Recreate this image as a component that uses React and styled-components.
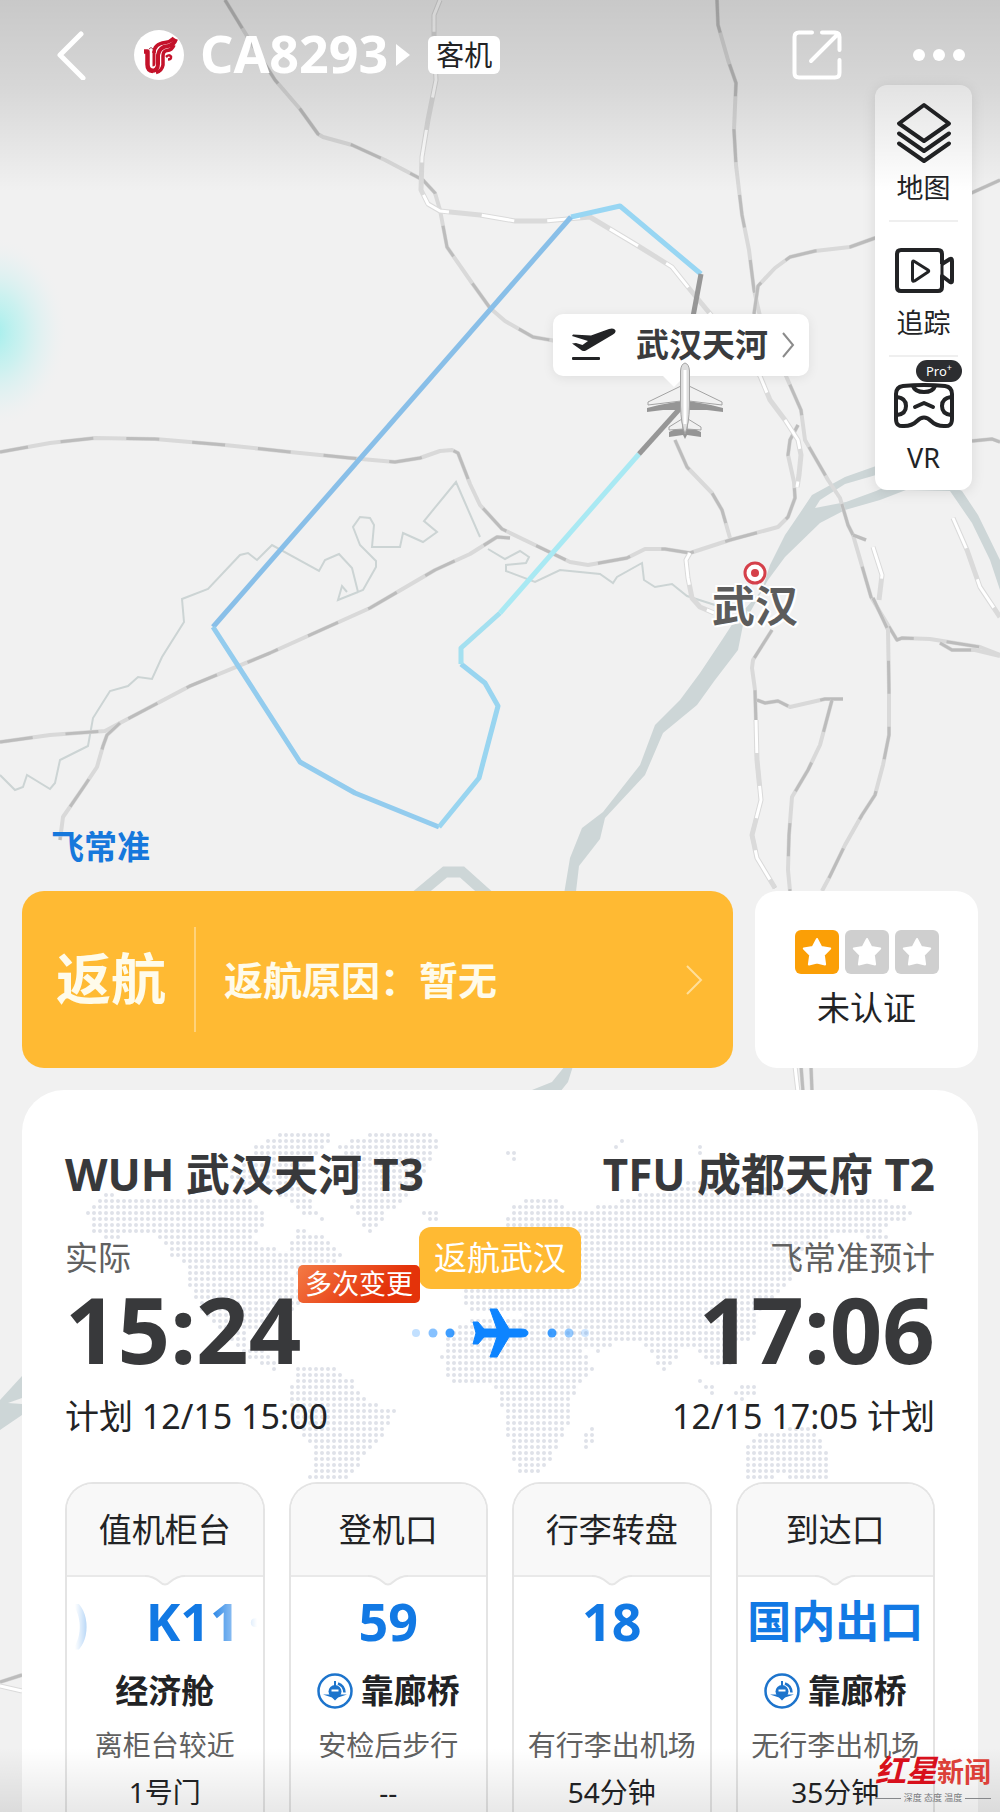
import React from "react";
import styled, { createGlobalStyle, css } from "styled-components";

const GlobalStyle = createGlobalStyle`
  *, *::before, *::after { box-sizing: border-box; }
  body {
    margin: 0;
    background: #f1f1f1;
    color: #222325;
    font-family: "Noto Sans", "Noto Sans CJK SC", sans-serif;
  }
  button {
    border: 0;
    margin: 0;
    padding: 0;
    background: none;
    color: inherit;
    font: inherit;
    cursor: pointer;
  }
  h1, h2, h3, p, dl, dd, dt { margin: 0; font: inherit; }
  svg { display: block; flex: none; }
`;

/* ---------- page frame ---------- */

const Page = styled.div`
  position: relative;
  display: flex;
  flex-direction: column;
  min-height: 100vh;
  overflow: hidden;
  background: #f1f1f1;
`;

const MapCanvas = styled.svg`
  position: absolute;
  inset: 0;
  width: 100%;
  height: 1812px;
`;

const TopShade = styled.div`
  position: absolute;
  top: 0;
  left: 0;
  right: 0;
  height: 192px;
  background: linear-gradient(rgba(0, 0, 0, 0.17), rgba(0, 0, 0, 0.11) 45%, rgba(0, 0, 0, 0));
  pointer-events: none;
`;

const BottomShade = styled.div`
  position: absolute;
  bottom: 0;
  left: 0;
  right: 0;
  height: 64px;
  background: linear-gradient(rgba(0, 0, 0, 0), rgba(0, 0, 0, 0.09));
  pointer-events: none;
`;

const Stage = styled.section`
  position: relative;
  display: flex;
  flex-direction: column;
  min-height: 891px;
`;

/* ---------- header ---------- */

const Header = styled.header`
  position: relative;
  z-index: 2;
  display: flex;
  align-items: center;
  height: 85px;
  padding: 24px 35px 0 56px;
  color: #fff;
`;

const FlightTitle = styled.div`
  display: flex;
  align-items: center;
  gap: 8px;
  margin-left: 48px;
  flex: 1;
`;

const FlightNumber = styled.h1`
  margin-left: 8px;
  font-size: 52px;
  line-height: 56px;
  padding-bottom: 4px;
  font-weight: 700;
`;

const PlaneType = styled.span`
  margin-left: 10px;
  padding: 0 8px;
  border-radius: 6px;
  background: #fff;
  color: #222325;
  font-size: 28px;
  line-height: 38px;
`;

const HeaderActions = styled.div`
  display: flex;
  align-items: center;
  gap: 71px;
`;

/* ---------- tool panel ---------- */

const ToolPanel = styled.nav`
  display: flex;
  flex-direction: column;
  align-self: flex-end;
  width: 97px;
  margin-right: 28px;
  border-radius: 12px;
  background: #fff;
  box-shadow: 0 2px 14px rgba(0, 0, 0, 0.1);
`;

const Tool = styled.button`
  position: relative;
  display: flex;
  flex-direction: column;
  align-items: center;
  justify-content: space-between;
  height: 135px;
  padding: 16px 0 12px;
  font-size: 27px;
  line-height: 40px;

  & + & {
    padding-top: 19px;
  }

  & + &::before {
    content: "";
    position: absolute;
    top: 0;
    left: 14px;
    right: 14px;
    height: 2px;
    background: #efefef;
  }
`;

const ToolIcon = styled.span`
  display: flex;
  align-items: center;
  justify-content: center;
  height: 64px;
`;

const ProBadge = styled.span`
  position: absolute;
  top: 5px;
  right: 10px;
  width: 46px;
  border-radius: 11px;
  background: #2c2d30;
  color: #fff;
  font-size: 13px;
  line-height: 22px;
  text-align: center;

  sup {
    font-size: 9px;
    line-height: 0;
  }
`;

/* ---------- map pins ---------- */

const AirportPin = styled.button`
  position: absolute;
  top: 314px;
  left: 553px;
  display: flex;
  align-items: center;
  height: 62px;
  padding: 0 14px 0 18px;
  border-radius: 10px;
  background: #fff;
  box-shadow: 0 2px 12px rgba(0, 0, 0, 0.08);
  color: #3a3b3d;
  font-size: 33px;
  line-height: 48px;
  font-weight: 700;

  span {
    margin: 0 13px 0 19px;
  }

  &::after {
    content: "";
    position: absolute;
    top: 100%;
    left: 110px;
    border: 11px solid transparent;
    border-top-color: #fff;
    border-bottom: 0;
  }
`;

const PlaneMarker = styled.svg`
  position: absolute;
  top: 362px;
  left: 645px;
`;

const CityPin = styled.div`
  position: absolute;
  top: 561px;
  left: 712px;
  display: flex;
  flex-direction: column;
  align-items: center;
  color: #5c5c5c;
  font-size: 43px;
  line-height: 42px;
  font-weight: 700;
  text-shadow: 2px 0 #fff, -2px 0 #fff, 0 2px #fff, 0 -2px #fff, 2px 2px #fff, -2px -2px #fff;
`;

const Brand = styled.p`
  margin-top: auto;
  padding: 0 0 20px 51px;
  color: #1678dc;
  font-size: 33px;
  line-height: 48px;
  font-weight: 700;
`;

/* ---------- status row ---------- */

const StatusRow = styled.section`
  position: relative;
  display: flex;
  gap: 22px;
  padding: 0 22px;
  height: 177px;
`;

const StatusBanner = styled.button`
  display: flex;
  flex: 1;
  align-items: center;
  padding: 0 30px 0 34px;
  border-radius: 22px;
  background: #ffba33;
  color: #fffbea;
  text-align: left;
`;

const StatusName = styled.strong`
  padding-right: 28px;
  padding-bottom: 4px;
  border-right: 2px solid #ffd27a;
  font-size: 55px;
  line-height: 101px;
`;

const StatusReason = styled.span`
  flex: 1;
  padding-left: 28px;
  font-size: 39px;
  line-height: 56px;
  font-weight: 700;
`;

const CertCard = styled.div`
  display: flex;
  flex-direction: column;
  align-items: center;
  width: 223px;
  padding-top: 39px;
  border-radius: 22px;
  background: #fff;
  font-size: 33px;
  line-height: 48px;
`;

const Stars = styled.div`
  display: flex;
  gap: 6px;
  margin-bottom: 10px;
`;

const Star = styled.span`
  display: flex;
  align-items: center;
  justify-content: center;
  width: 44px;
  height: 44px;
  border-radius: 6px;
  background: ${(p) => (p.$on ? "#fb9f06" : "#cfcfcf")};
`;

/* ---------- flight card ---------- */

const FlightCard = styled.main`
  position: relative;
  display: flex;
  flex: 1;
  flex-direction: column;
  margin: 22px 22px 0;
  padding: 54px 43px 0 43px;
  border-radius: 42px 42px 0 0;
  background: #fff;
`;

const WorldMap = styled.svg`
  position: absolute;
  top: 0;
  left: 0;
  width: 100%;
  height: 393px;
`;

const Route = styled.div`
  position: relative;
  display: grid;
  grid-template-columns: 1fr auto 1fr;
`;

const Endpoint = styled.div`
  display: flex;
  flex-direction: column;
  color: #38393b;
  text-align: ${(p) => (p.$end ? "right" : "left")};
  white-space: nowrap;
`;

const AirportName = styled.h2`
  height: 60px;
  font-size: 44px;
  line-height: 60px;
  font-weight: 700;
`;

const TimeNote = styled.p`
  margin-top: 30px;
  color: #616161;
  font-size: 33px;
  line-height: 48px;
`;

const BigTime = styled.p`
  font-size: 92px;
  line-height: 94px;
  font-weight: 700;
`;

const PlanTime = styled.p`
  margin-top: 16px;
  margin-bottom: 42px;
  color: #222325;
  font-size: 34px;
  line-height: 48px;
`;

const RouteMiddle = styled.div`
  display: flex;
  flex-direction: column;
  align-items: center;
  width: 0;
  padding-top: 83px;
`;

const ReturnBadge = styled.span`
  position: relative;
  padding: 0 15px;
  border-radius: 12px;
  background: #ffba33;
  color: #fff;
  font-size: 33px;
  line-height: 62px;
  white-space: nowrap;
`;

const ChangeBadge = styled.span`
  position: absolute;
  top: 38px;
  right: 100%;
  margin-right: -1px;
  padding: 0 7px;
  border-radius: 5px;
  background: linear-gradient(135deg, #f47a45, #e4330a 70%);
  color: #fff;
  font-size: 27px;
  line-height: 38px;
`;

const FlightLine = styled.svg`
  margin-top: 17px;
`;

/* ---------- info tiles ---------- */

const Tiles = styled.div`
  position: relative;
  display: grid;
  grid-template-columns: repeat(4, 1fr);
  gap: 24px;
  flex: 1;
`;

const Tile = styled.section`
  display: flex;
  flex-direction: column;
  align-items: center;
  min-height: 329px;
  border: 2px solid #e4e4e4;
  border-bottom: 0;
  border-radius: 28px 28px 0 0;
  background: #fff;
  overflow: hidden;
  white-space: nowrap;
`;

const TileHead = styled.h3`
  position: relative;
  align-self: stretch;
  border-bottom: 2px solid #e9e9e9;
  background: #f8f8f8;
  font-size: 33px;
  line-height: 91px;
  text-align: center;

  svg {
    position: absolute;
    top: 100%;
    left: 50%;
    margin-left: -20px;
  }
`;

const fade = css`
  mask-image: linear-gradient(90deg, transparent 8px, #000 48px, #000 140px, transparent 190px);
`;

const TileValue = styled.p`
  display: flex;
  align-items: center;
  justify-content: center;
  gap: ${(p) => (p.$scrolling ? "8px" : "0")};
  align-self: stretch;
  height: 60px;
  margin-top: 14px;
  padding-left: ${(p) => (p.$scrolling ? "4px" : "0")};
  color: #1279e4;
  font-size: ${(p) => (p.$words ? "44px" : "52px")};
  line-height: 60px;
  font-weight: 700;
  ${(p) => p.$scrolling && fade}
`;

const TrailingGroup = styled.span`
  margin-right: auto;
`;

const TileMode = styled.p`
  display: flex;
  align-items: center;
  gap: 8px;
  height: 48px;
  margin-top: 16px;
  font-size: 33px;
  line-height: 48px;
  font-weight: 700;
`;

const TileHint = styled.p`
  margin-top: 10px;
  color: #616161;
  font-size: 28px;
  line-height: 40px;
`;

const TileResult = styled.p`
  margin-top: 7px;
  font-size: 28px;
  line-height: 40px;
`;

/* ---------- news mark ---------- */

const NewsMark = styled.div`
  position: absolute;
  right: 9px;
  bottom: 8px;
  display: flex;
  flex-direction: column;
  width: 116px;
  color: #d8101c;
`;

const NewsName = styled.div`
  display: flex;
  align-items: baseline;
  justify-content: space-between;
  font-size: 27px;
  line-height: 40px;
  font-weight: 700;
  white-space: nowrap;

  em {
    font-size: 31px;
    font-weight: 700;
  }

  span { color: #dc4038; }
`;

const NewsMotto = styled.div`
  display: flex;
  align-items: center;
  gap: 3px;
  color: #77797c;
  font-size: 9px;
  line-height: 12px;
  white-space: nowrap;

  &::before,
  &::after {
    content: "";
    flex: 1;
    height: 1px;
    background: #85878a;
  }
`;

/* ---------- map data ---------- */

const RAILS = [
  "225,0 247,36 275,80 300,109 318,134 323,137 352,145 385,160 423,180 435,193 440,210 447,247 472,283 490,308 505,321 533,337 556,341",
  "717,0 718,25 728,60 736,83 734,130 736,165 742,215 749,250 754,290 762,325 786,376 801,410 805,440 828,480 840,498 848,525 853,535 871,597 897,640 902,638 930,639 980,647 1000,655",
  "853,535 866,540",
  "1000,180 945,205 875,238 850,247 815,251 790,257 775,268 758,286 754,314",
  "798,425 790,440 788,455 794,482 795,498 788,517 778,527 730,540 690,553 665,549 645,549 627,558 588,565 570,562 535,545 502,529 480,505 470,484 458,453 452,450 440,451 420,458 395,462 350,458 290,452 225,445 155,439 95,438 50,443 0,452",
  "675,440 687,467 712,493 722,510 730,538",
  "0,742 50,735 105,731 120,723 190,686 270,653 370,608 435,570 470,554 497,537 510,538",
  "120,723 107,735 103,746 97,767 85,785 63,817 60,840",
  "772,630 753,660 752,668 755,690 757,760 761,800 752,835 757,858 775,888",
  "757,700 765,703 778,701 790,707 825,699 843,699",
  "832,700 820,745 808,770 792,797 789,835 788,870 790,891",
  "873,598 888,630 889,690 889,735 883,765 875,795 862,815 845,845 830,876 822,891",
  "801,1066 803,1092",
  "811,1066 812,1092",
  "940,643 952,650 975,650 1000,656",
  "972,441 992,439 1000,442",
  "0,1682 22,1675",
];

const PALE_RAILS = [
  "440,0 434,15 434,40 436,80 428,120 422,157 421,190 428,204 440,211 480,215 515,221 545,221 590,217 635,244 672,267 692,292 712,316 760,376 770,400 785,420 798,440 801,455 799,475 797,487",
  "690,553 686,560 688,578 692,598 700,607 714,613",
  "873,547 882,575 879,600",
  "953,518 967,550 980,587 1000,617",
  "756,720 757,760 761,800 752,835 757,858 775,888",
  "795,1066 798,1092",
  "0,1686 22,1691",
];

const STREAMS = [
  "0,775 15,790 23,787 27,775 50,789 55,783 60,760 88,746 93,718 110,691 128,686 138,677 152,679 162,657 184,622 182,599 208,589 240,555 248,553 257,560 272,545 319,571 325,560 339,554 352,568 358,592 363,590 376,567 376,561 360,545 353,527 360,517 370,518 374,525 372,547 400,547 403,533 423,542 437,532 424,521 456,482 466,505 480,537",
  "358,592 338,600 342,586 347,592",
  "488,549 505,559 520,551 529,557 526,563 506,565 506,571 535,582 560,570 600,574 613,583 617,577 642,563 644,580 655,587 672,584 687,596 715,605",
];

const RIVERS = [
  "876,466 845,477 812,495 800,513 785,535 770,565 762,590 735,620 722,640 700,673 680,700 655,725 640,765 603,812 582,828 570,858 563,900 575,900 579,866 600,839 605,818 645,775 663,733 697,705 715,680 738,650 743,625 768,580 785,557 820,523 845,510 880,500 906,490 950,491 972,523 990,560 1000,590 1000,560 978,515 962,491 940,480 900,480 876,491 846,502 815,508 820,500 845,484 876,475",
  "0,1400 22,1376 22,1398 8,1403 22,1404 22,1415 0,1430",
  "527,1092 552,1082 565,1066 573,1066 568,1082 560,1092",
];

const TRACK = [
  ["701,274 620,206 571,217", "#98d6f3"],
  ["571,217 213,627", "#89bfe8"],
  ["213,627 300,762 355,793 439,827", "#93ccee"],
  ["439,827 479,778 498,706 485,683 461,664", "#99d5f0"],
  ["461,664 461,648 500,613", "#a4e0f0"],
  ["500,613 639,454", "#a9e9f3"],
  ["701,274 692,322", "#979797"],
  ["639,454 684,404", "#979797"],
];

function Terrain() {
  return (
    <MapCanvas viewBox="0 0 1000 1812" preserveAspectRatio="xMidYMin slice" aria-hidden="true">
      <defs>
        <radialGradient id="glow">
          <stop offset="0" stopColor="#a2efec" />
          <stop offset="0.4" stopColor="#bcf1ef" stopOpacity="0.7" />
          <stop offset="0.75" stopColor="#dcf1f2" stopOpacity="0.4" />
          <stop offset="1" stopColor="#f1f1f1" stopOpacity="0" />
        </radialGradient>
      </defs>
      <ellipse cx="-6" cy="332" rx="74" ry="96" fill="url(#glow)" />
      <g fill="#cdd6d7">
        {RIVERS.map((p) => <polygon key={p} points={p} />)}
      </g>
      <path d="M415 897L445 872H462L490 897" fill="none" stroke="#cdd6d7" strokeWidth="11" />
      <g fill="none" stroke="#ccd4d4" strokeWidth="2">
        {STREAMS.map((p) => <polyline key={p} points={p} />)}
      </g>
      <g fill="none" strokeLinejoin="round">
        {RAILS.map((p) => (
          <g key={p}>
            <polyline points={p} stroke="#d9d9d9" strokeWidth="4" />
            <polyline points={p} stroke="#bcbcbc" strokeWidth="3" strokeDasharray="33 33" />
          </g>
        ))}
        {PALE_RAILS.map((p) => (
          <g key={p}>
            <polyline points={p} stroke="#dadada" strokeWidth="5" />
            <polyline points={p} stroke="#ffffff" strokeWidth="3" strokeDasharray="33 33" />
          </g>
        ))}
      </g>
      <g fill="none" strokeWidth="5" strokeLinejoin="round">
        {TRACK.map(([p, c]) => <polyline key={p} points={p} stroke={c} />)}
      </g>
    </MapCanvas>
  );
}

/* ---------- dotted world ---------- */

const LAND = [
  "102,1194 160,1198 215,1198 250,1198 270,1215 262,1228 250,1238 278,1250 285,1265 300,1290 300,1308 280,1312 262,1325 250,1330 245,1345 262,1350 275,1362 282,1374 262,1365 235,1348 220,1330 205,1318 190,1290 188,1265 172,1255 160,1238 130,1232 115,1240 92,1235 92,1222 84,1214",
  "294,1228 315,1232 330,1240 343,1258 330,1268 300,1275 280,1262 290,1248",
  "255,1145 285,1133 332,1133 330,1145 310,1160 300,1185 315,1208 324,1222 300,1212 280,1195 240,1192 225,1175 250,1160",
  "335,1145 375,1133 428,1133 442,1142 430,1160 420,1188 400,1202 385,1215 372,1234 360,1222 350,1206 362,1185 350,1165",
  "422,1211 440,1211 440,1223 428,1223",
  "298,1368 335,1368 352,1380 362,1398 396,1410 385,1435 370,1450 355,1472 347,1484 308,1484 315,1455 300,1430 290,1405 292,1385",
  "445,1338 460,1322 500,1316 566,1322 590,1362 597,1370 575,1390 570,1425 555,1455 540,1476 520,1476 510,1450 505,1420 500,1395 495,1386 450,1382 441,1360",
  "580,1438 592,1428 596,1434 590,1448 581,1458",
  "462,1304 466,1286 500,1270 503,1225 512,1205 535,1195 552,1196 572,1210 600,1206 640,1194 700,1180 780,1186 850,1197 900,1202 918,1215 880,1228 892,1240 872,1240 850,1232 812,1240 797,1262 795,1280 775,1295 755,1318 758,1335 735,1345 732,1365 708,1366 700,1352 682,1348 665,1376 655,1360 640,1340 620,1340 600,1352 575,1348 565,1326 500,1310 480,1316",
  "698,1376 716,1390 712,1398 700,1384",
  "735,1390 750,1380 762,1384 752,1398 738,1400",
  "743,1448 765,1430 780,1434 800,1424 815,1430 825,1450 832,1468 825,1484 795,1484 785,1475 748,1484",
  "612,1145 624,1140 620,1152",
  "694,1146 706,1146 706,1154 696,1154",
  "506,1150 518,1150 516,1166",
].map((s) => s.split(" ").map((pt) => pt.split(",").map(Number)));

function onLand(x, y) {
  return LAND.some((poly) => {
    let inside = false;
    for (let i = 0, j = poly.length - 1; i < poly.length; j = i++) {
      const [xi, yi] = poly[i];
      const [xj, yj] = poly[j];
      if (yi > y !== yj > y && x < ((xj - xi) * (y - yi)) / (yj - yi) + xi) inside = !inside;
    }
    return inside;
  });
}

let worldPath = "";
for (let y = 1135; y < 1483; y += 6) {
  for (let x = 82; x < 930; x += 6) {
    if (onLand(x, y)) worldPath += `M${x} ${y}h0`;
  }
}

/* ---------- drawings ---------- */

const AirlineLogo = () => (
  <svg width="50" height="50" viewBox="0 0 50 50" aria-label="Air China">
    <circle cx="25" cy="25" r="25" fill="#fff" />
    <g fill="none" stroke="#c4122a" strokeLinejoin="round">
      <path d="M10 21.500h3.500v13q0 6 5.500 6.500" strokeWidth="4.500" />
      <path d="M42 9Q40 15 34 16Q25 17 24 25V34Q24 41 17 41" strokeWidth="4" />
      <path d="M20 21v12q0 2-1.500 2" strokeWidth="3" />
      <path d="M40 8Q36 12 31 12.500Q20 14 20 23" strokeWidth="3.500" />
      <path d="M40 15Q38 20 33 20.500Q29 21 29 26V35Q28 41 22 42.500" strokeWidth="3.500" />
      <path d="M32 27Q35 24 37 26.500Q37.500 29.500 34 29.500" strokeWidth="2.500" />
    </g>
    <path d="M15 19l2-1.500 2 1.500" fill="none" stroke="#9c4a58" />
  </svg>
);

const Chevron = ({ w, h, color, stroke }) => (
  <svg width={w} height={h} viewBox={`0 0 ${w} ${h}`} fill="none" stroke={color} strokeWidth={stroke}>
    <path d={`M2 2L${w - 2} ${h / 2}L2 ${h - 2}`} />
  </svg>
);

const LayersIcon = () => (
  <svg width="56" height="62" viewBox="0 0 56 62" fill="none" stroke="#222325" strokeWidth="4" strokeLinejoin="round" strokeLinecap="round">
    <path d="M28 3L53 21.500L28 39L3 21.500Z" />
    <path d="M3 31.500L28 49L53 31.500" />
    <path d="M3 41.500L28 59L53 41.500" />
  </svg>
);

const CameraIcon = () => (
  <svg width="60" height="46" viewBox="0 0 60 46" fill="none" stroke="#222325" strokeWidth="4" strokeLinejoin="round">
    <path d="M48 16V6q0-4-4-4H7q-4 0-4 4v33q0 4 4 4h37q4 0 4-4V28l8 6q2 1 2-1V13q0-3-2-2l-8 5" />
    <path d="M48 16v13" strokeWidth="3" />
    <path d="M18.500 14.500q0-2.500 2-1L34 22q1.500 1 0 2l-13.500 9q-2 1-2-1z" strokeWidth="3" />
  </svg>
);

const VrIcon = () => (
  <svg width="62" height="46" viewBox="0 0 62 46" fill="none" stroke="#222325" strokeWidth="4" strokeLinejoin="round" strokeLinecap="round">
    <path d="M10 3Q31 1 52 3Q59 4 59 11V36Q59 44 51 43Q43 43 38 38Q31 31 24 38Q19 43 11 43Q3 44 3 36V11Q3 4 10 3Z" />
    <path d="M20 3q2 6 11 6t11-6" />
    <path d="M4 14q9 1 9 9t-9 9M58 14q-9 1-9 9t9 9" />
    <path d="M22 24l9-4 9 4" />
  </svg>
);

const ShareIcon = () => (
  <svg width="50" height="50" viewBox="0 0 50 50" fill="none" stroke="#fff" strokeWidth="4" strokeLinecap="round" strokeLinejoin="round">
    <path d="M20 2.500H7q-4.500 0-4.500 4.500v36q0 4.500 4.500 4.500h36q4.500 0 4.500-4.500V30" />
    <path d="M30 2.500h13q4.500 0 4.500 4.500v13M45 5L19 31" />
  </svg>
);

const TakeoffIcon = () => (
  <svg width="46" height="34" viewBox="0 0 46 34" fill="#222325">
    <path d="M2 6.500L20 7.500L38 1Q43-.5 44.500 2.500Q45 5 42 6.500L15 22.500Q12 24 9.500 21.500L1 15.500L5 15L11.500 17L17 13L1 8Z" />
    <rect x="1" y="29" width="28" height="3" rx="1" />
  </svg>
);

const Aircraft = () => (
  <PlaneMarker width="80" height="80" viewBox="0 0 80 80" aria-hidden="true">
    <g fill="#959595">
      <path d="M36 39L14 43L2 46V50L18 48L36 48ZM44 39L66 43L78 46V50L62 48L44 48Z" />
      <path d="M37 64L24 70V75L38 73L40 77L42 73L56 75V70L43 64Z" />
    </g>
    <g fill="#f1f1f1" stroke="#a3a3a3" strokeWidth="1">
      <path d="M36 24L3 40V43L36 39ZM44 24L77 40V43L44 39Z" />
      <path d="M37 57L24 65V68L38 67ZM43 57L56 65V68L42 67Z" />
      <path d="M40 1Q36 2 35.500 9V44Q36 62 40 72Q44 62 44.500 44V9Q44 2 40 1Z" fill="#dedede" />
    </g>
    <path d="M40 8v54" stroke="#fff" strokeWidth="3" />
  </PlaneMarker>
);

const StarShape = () => (
  <svg width="32" height="32" viewBox="0 0 32 32">
    <path d="M16 3l4.200 8 9 1.500-6.400 6.500 1.300 9.500-8.100-2-8.100 2L9.200 19 2.800 12.500l9-1.500z" fill="#fff" stroke="#fff" strokeWidth="2" strokeLinejoin="round" />
  </svg>
);

const BridgeIcon = () => (
  <svg width="36" height="36" viewBox="0 0 36 36">
    <circle cx="18" cy="18" r="16.500" fill="#fff" stroke="#1d74cc" strokeWidth="2.500" />
    <path d="M18 8v5" stroke="#1d74cc" strokeWidth="2" />
    <circle cx="18" cy="18.500" r="6.500" fill="#1d74cc" />
    <path d="M21 10.500q6 2 6.500 9" fill="none" stroke="#1d74cc" strokeWidth="2.500" />
    <path d="M6 21.500h24l-9 3-3 3-3-3z" fill="#1d74cc" />
    <path d="M14.500 17.500h7" stroke="#fff" strokeWidth="2" />
  </svg>
);

const Notch = () => (
  <svg width="40" height="12" viewBox="0 0 40 12">
    <path d="M0 0H40Q33 0 25 7Q20 12 15 7Q7 0 0 0Z" fill="#f8f8f8" />
    <path d="M0 1Q8 1 15 7Q20 12 25 7Q32 1 40 1" fill="none" stroke="#e6e6e6" strokeWidth="2" />
  </svg>
);

/* ---------- content ---------- */

const TILES = [
  { title: "值机柜台", value: "K11", scrolling: true, mode: "经济舱", hint: "离柜台较近", result: "1号门" },
  { title: "登机口", value: "59", mode: "靠廊桥", bridge: true, hint: "安检后步行", result: "--" },
  { title: "行李转盘", value: "18", mode: "", hint: "有行李出机场", result: "54分钟" },
  { title: "到达口", value: "国内出口", words: true, mode: "靠廊桥", bridge: true, hint: "无行李出机场", result: "35分钟" },
];

export default function App() {
  return (
    <Page>
      <GlobalStyle />
      <Terrain />

      <Stage>
        <Header>
          <button aria-label="返回">
            <svg width="30" height="50" viewBox="0 0 30 50" fill="none" stroke="#fff" strokeWidth="5" strokeLinecap="round" strokeLinejoin="round">
              <path d="M25 4L4 25L27 48" />
            </svg>
          </button>
          <FlightTitle>
            <AirlineLogo />
            <FlightNumber>CA8293</FlightNumber>
            <svg width="14" height="22" viewBox="0 0 14 22"><path d="M0 0L14 11L0 22Z" fill="#fff" /></svg>
            <PlaneType>客机</PlaneType>
          </FlightTitle>
          <HeaderActions>
            <button aria-label="分享"><ShareIcon /></button>
            <button aria-label="更多">
              <svg width="52" height="12" viewBox="0 0 52 12" fill="#fff">
                <circle cx="6" cy="6" r="6" /><circle cx="26" cy="6" r="6" /><circle cx="46" cy="6" r="6" />
              </svg>
            </button>
          </HeaderActions>
        </Header>

        <ToolPanel>
          <Tool><ToolIcon><LayersIcon /></ToolIcon>地图</Tool>
          <Tool><ToolIcon><CameraIcon /></ToolIcon>追踪</Tool>
          <Tool>
            <ToolIcon><VrIcon /></ToolIcon>VR
            <ProBadge>Pro<sup>+</sup></ProBadge>
          </Tool>
        </ToolPanel>

        <AirportPin>
          <TakeoffIcon />
          <span>武汉天河</span>
          <Chevron w={14} h={28} color="#8b8b8b" stroke={2} />
        </AirportPin>
        <Aircraft />
        <CityPin>
          <svg width="24" height="24" viewBox="0 0 24 24">
            <circle cx="12" cy="12" r="10" fill="#fff" stroke="#d5404a" strokeWidth="3" />
            <circle cx="12" cy="12" r="4" fill="#d5404a" />
          </svg>
          武汉
        </CityPin>

        <Brand>飞常准</Brand>
        <TopShade />
      </Stage>

      <StatusRow>
        <StatusBanner>
          <StatusName>返航</StatusName>
          <StatusReason>返航原因：暂无</StatusReason>
          <Chevron w={18} h={32} color="#ffdf9a" stroke={2} />
        </StatusBanner>
        <CertCard>
          <Stars>
            <Star $on><StarShape /></Star>
            <Star><StarShape /></Star>
            <Star><StarShape /></Star>
          </Stars>
          未认证
        </CertCard>
      </StatusRow>

      <FlightCard>
        <WorldMap viewBox="22 1090 956 393" aria-hidden="true">
          <path d={worldPath} fill="none" stroke="#dfe2e9" strokeWidth="4" strokeLinecap="round" />
        </WorldMap>

        <Route>
          <Endpoint>
            <AirportName>WUH 武汉天河 T3</AirportName>
            <TimeNote>实际</TimeNote>
            <BigTime>15:24</BigTime>
            <PlanTime>计划 12/15 15:00</PlanTime>
          </Endpoint>
          <RouteMiddle>
            <ReturnBadge>
              返航武汉
              <ChangeBadge>多次变更</ChangeBadge>
            </ReturnBadge>
            <FlightLine width="178" height="54" viewBox="0 0 178 54" fill="#0d84ff">
              <circle cx="5" cy="27" r="4" opacity="0.25" />
              <circle cx="22" cy="27" r="4.500" opacity="0.5" />
              <circle cx="39" cy="27" r="4.500" opacity="0.8" />
              <path d="M62 16H67L73 23H86L79 3H86L98 23H110Q117 23 117 27Q117 31 110 31H98L86 51H79L86 31H73L67 38H62L65 27Z" stroke="#0d84ff" strokeLinejoin="round" />
              <circle cx="141" cy="27" r="4.500" opacity="0.8" />
              <circle cx="158" cy="27" r="4.500" opacity="0.45" />
              <circle cx="174" cy="27" r="4" opacity="0.2" />
            </FlightLine>
          </RouteMiddle>
          <Endpoint $end>
            <AirportName>TFU 成都天府 T2</AirportName>
            <TimeNote>飞常准预计</TimeNote>
            <BigTime>17:06</BigTime>
            <PlanTime>12/15 17:05 计划</PlanTime>
          </Endpoint>
        </Route>

        <Tiles>
          {TILES.map((t) => (
            <Tile key={t.title}>
              <TileHead>{t.title}<Notch /></TileHead>
              <TileValue $words={t.words} $scrolling={t.scrolling}>
                {t.scrolling && <TrailingGroup>)</TrailingGroup>}
                <span>{t.value}</span>
                {t.scrolling && <span>·</span>}
              </TileValue>
              <TileMode>{t.bridge && <BridgeIcon />}{t.mode}</TileMode>
              <TileHint>{t.hint}</TileHint>
              <TileResult>{t.result}</TileResult>
            </Tile>
          ))}
        </Tiles>
      </FlightCard>

      <BottomShade />
      <NewsMark>
        <NewsName><em>红星</em><span>新闻</span></NewsName>
        <NewsMotto>深度 态度 温度</NewsMotto>
      </NewsMark>
    </Page>
  );
}
